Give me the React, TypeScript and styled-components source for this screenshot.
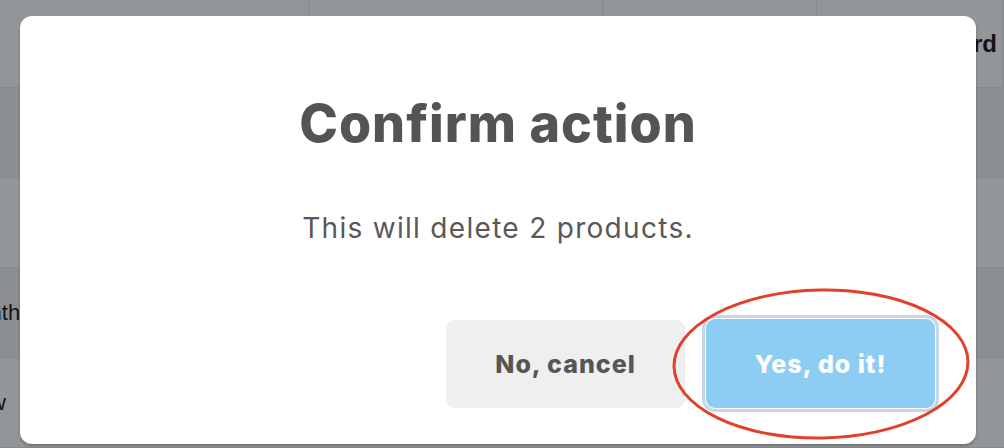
import React from 'react'
import styled, { createGlobalStyle } from 'styled-components'

const GlobalStyle = createGlobalStyle`
  html, body {
    margin: 0;
    padding: 0;
    background: #fff;
  }
  body {
    font-family: Inter, "Liberation Sans", sans-serif;
  }
`

const Page = styled.div`
  position: relative;
  width: 1004px;
  height: 448px;
  overflow: hidden;
  background: #fff;
`

const Table = styled.div`
  display: flex;
  flex-direction: column;
`

type RowProps = {
  striped?: boolean
  head?: boolean
}
const Row = styled.div<RowProps>`
  display: grid;
  grid-template-columns: 309px 294px 214px 1fr;
  height: ${props => (props.head ? '88px' : '90px')};
  background: ${props => (props.striped ? '#f1f1f1' : '#fdfdfd')};
  border-bottom: 1px solid #e8e8e8;
  box-sizing: border-box;
`

const Cell = styled.div<RowProps>`
  display: flex;
  align-items: center;
  overflow: hidden;
  white-space: nowrap;
  border-right: ${props => (props.head ? '1px solid #e6e6e6' : 'none')};
  font-family: 'Liberation Sans', Arial, sans-serif;
  font-size: ${props => (props.head ? '24px' : '22px')};
  font-weight: ${props => (props.head ? 700 : 400)};
  color: #111;
`

const CutText = styled.span<{ shift: number }>`
  margin-left: ${props => props.shift}px;
`

const Overlay = styled.div`
  position: absolute;
  inset: 0;
  background: rgba(18, 24, 30, 0.45);
`

const Modal = styled.div`
  position: absolute;
  top: 16px;
  left: 20px;
  width: 956px;
  height: 428px;
  box-sizing: border-box;
  padding: 82px 41px 36px;
  background: #fff;
  border-radius: 12px;
  box-shadow: 0 2px 3px rgba(0, 0, 0, 0.25);
  display: flex;
  flex-direction: column;
  align-items: center;
`

const Title = styled.h2`
  margin: 0;
  font-size: 52px;
  line-height: 1;
  font-weight: 800;
  color: #545454;
  letter-spacing: 1px;
`

const Message = styled.p`
  margin: 64px 0 0;
  font-size: 28px;
  line-height: 1;
  font-weight: 400;
  color: #585858;
  letter-spacing: 1.3px;
`

const Actions = styled.div`
  align-self: stretch;
  margin-top: 77px;
  display: flex;
  justify-content: flex-end;
  align-items: center;
  gap: 21px;
`

type ButtonProps = {
  primary?: boolean
}
const Button = styled.button<ButtonProps>`
  width: ${props => (props.primary ? '229px' : '239px')};
  height: ${props => (props.primary ? '89px' : '88px')};
  border: none;
  border-radius: 9px;
  font-family: Inter, 'Liberation Sans', sans-serif;
  font-size: 25px;
  font-weight: 800;
  letter-spacing: 1px;
  background: ${props => (props.primary ? '#8dcdf3' : '#efefef')};
  color: ${props => (props.primary ? '#fff' : '#555')};
  outline: ${props => (props.primary ? '3px solid #c8d5e4' : 'none')};
  outline-offset: 1px;
`

const Annotation = styled.svg`
  position: absolute;
  left: 670px;
  top: 286px;
  width: 302px;
  height: 156px;
  pointer-events: none;
`

function App() {
  return (
    <Page>
      <GlobalStyle />
      <Table>
        <Row head>
          <Cell head />
          <Cell head />
          <Cell head />
          <Cell head>
            <CutText shift={76}>Standard</CutText>
          </Cell>
        </Row>
        <Row striped>
          <Cell />
          <Cell />
          <Cell />
          <Cell />
        </Row>
        <Row>
          <Cell />
          <Cell />
          <Cell />
          <Cell />
        </Row>
        <Row striped>
          <Cell>
            <CutText shift={-41}>Month</CutText>
          </Cell>
          <Cell />
          <Cell />
          <Cell />
        </Row>
        <Row>
          <Cell>
            <CutText shift={-38}>New</CutText>
          </Cell>
          <Cell />
          <Cell />
          <Cell />
        </Row>
      </Table>
      <Overlay />
      <Modal>
        <Title>Confirm action</Title>
        <Message>This will delete 2 products.</Message>
        <Actions>
          <Button>No, cancel</Button>
          <Button primary>Yes, do it!</Button>
        </Actions>
      </Modal>
      <Annotation viewBox="0 0 302 156">
        <ellipse cx="151" cy="78" rx="147" ry="74" fill="none" stroke="#e2402b" strokeWidth="3" transform="rotate(-1 151 78)" />
      </Annotation>
    </Page>
  )
}

export default App
